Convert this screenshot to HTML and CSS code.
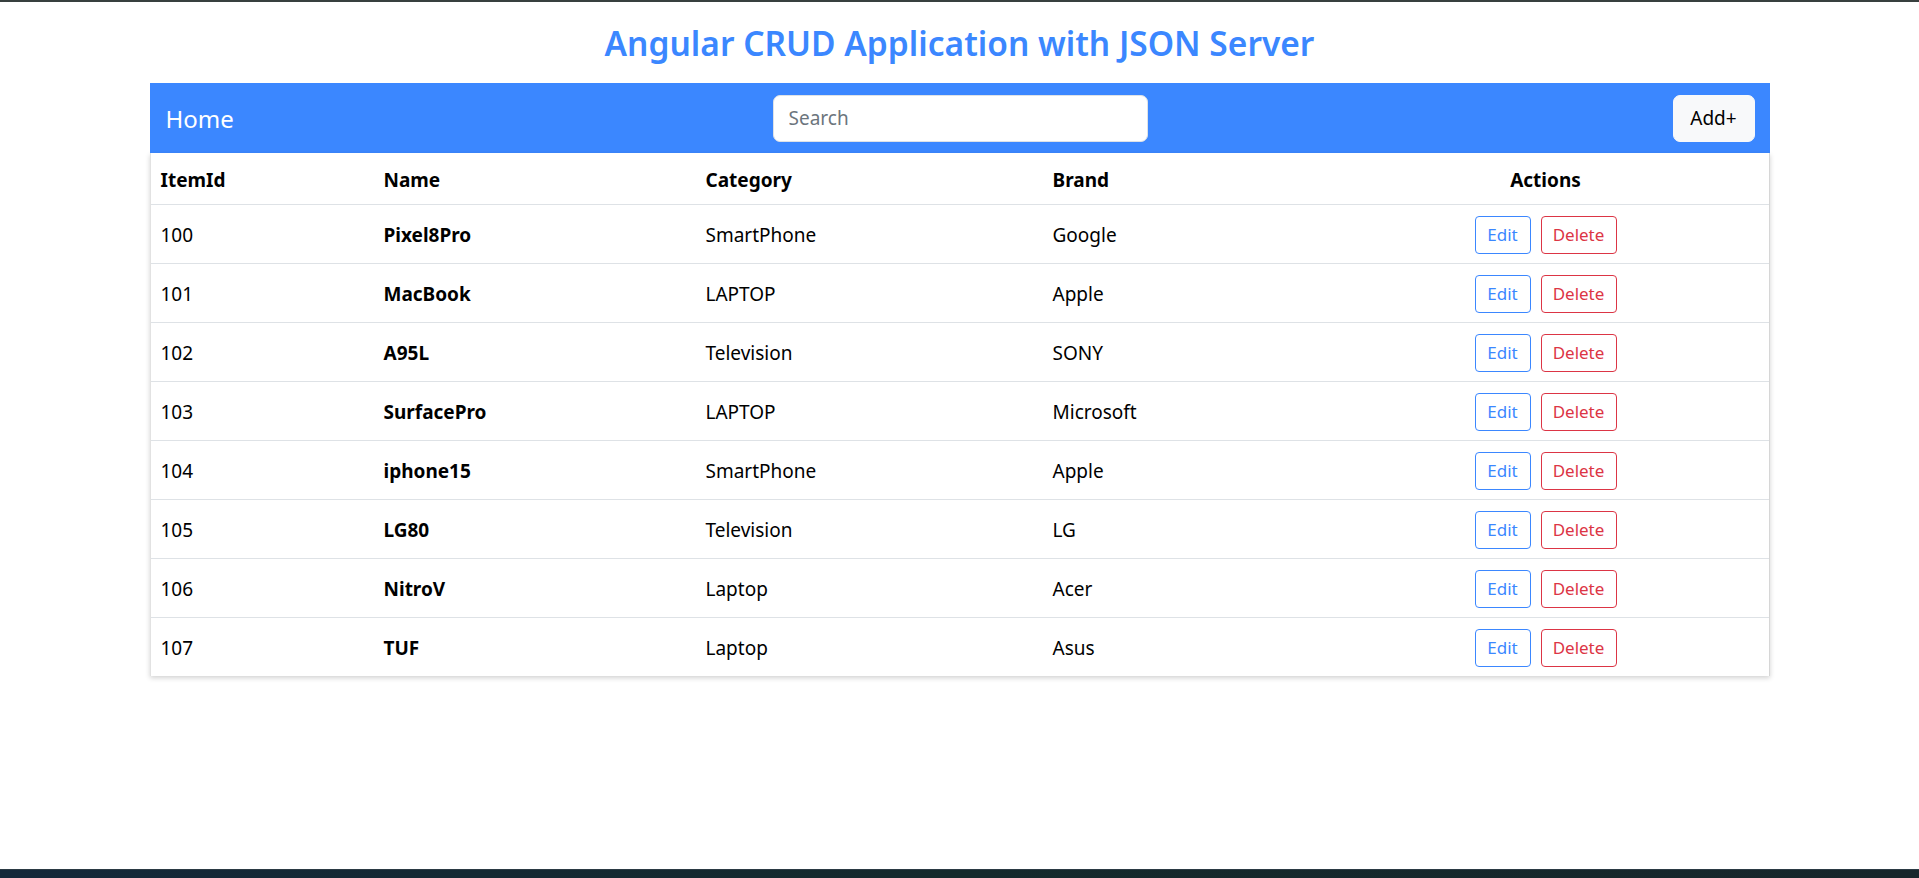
FILE: index.html
```html
<!DOCTYPE html>
<html lang="en">
<head>
<meta charset="utf-8">
<title>Angular CRUD Application with JSON Server</title>
<link rel="stylesheet" href="styles.css">
</head>
<body>
<div class="page">
  <main class="main">
    <h2 class="title">Angular CRUD Application with JSON Server</h2>
    <div class="container">
      <nav class="navbar">
        <a class="brand" href="#">Home</a>
        <input class="search" type="text" placeholder="Search">
        <button class="add-btn" type="button">Add+</button>
      </nav>
      <div class="card">
        <table class="items">
          <colgroup>
            <col class="c1"><col class="c2"><col class="c3"><col class="c4"><col class="c5">
          </colgroup>
          <thead>
            <tr><th>ItemId</th><th>Name</th><th>Category</th><th>Brand</th><th class="center">Actions</th></tr>
          </thead>
          <tbody>
            <tr><td>100</td><td class="bold">Pixel8Pro</td><td>SmartPhone</td><td>Google</td><td class="center"><button class="btn edit">Edit</button><button class="btn del">Delete</button></td></tr>
            <tr><td>101</td><td class="bold">MacBook</td><td>LAPTOP</td><td>Apple</td><td class="center"><button class="btn edit">Edit</button><button class="btn del">Delete</button></td></tr>
            <tr><td>102</td><td class="bold">A95L</td><td>Television</td><td>SONY</td><td class="center"><button class="btn edit">Edit</button><button class="btn del">Delete</button></td></tr>
            <tr><td>103</td><td class="bold">SurfacePro</td><td>LAPTOP</td><td>Microsoft</td><td class="center"><button class="btn edit">Edit</button><button class="btn del">Delete</button></td></tr>
            <tr><td>104</td><td class="bold">iphone15</td><td>SmartPhone</td><td>Apple</td><td class="center"><button class="btn edit">Edit</button><button class="btn del">Delete</button></td></tr>
            <tr><td>105</td><td class="bold">LG80</td><td>Television</td><td>LG</td><td class="center"><button class="btn edit">Edit</button><button class="btn del">Delete</button></td></tr>
            <tr><td>106</td><td class="bold">NitroV</td><td>Laptop</td><td>Acer</td><td class="center"><button class="btn edit">Edit</button><button class="btn del">Delete</button></td></tr>
            <tr><td>107</td><td class="bold">TUF</td><td>Laptop</td><td>Asus</td><td class="center"><button class="btn edit">Edit</button><button class="btn del">Delete</button></td></tr>
          </tbody>
        </table>
      </div>
    </div>
  </main>
  <div class="taskbar"></div>
</div>
</body>
</html>
```
FILE: styles.css
```css
* { box-sizing: border-box; }
html, body { margin: 0; padding: 0; }
body {
  font-family: "Noto Sans", "Open Sans", sans-serif;
  font-size: 19px;
  color: #000;
  background: #fff;
}
.page {
  height: 100vh;
  display: flex;
  flex-direction: column;
  border-top: 2px solid #38403f;
}
.main { flex: 1; }
.taskbar {
  height: 9px;
  background: linear-gradient(90deg, #14283a 0%, #142a2c 50%, #17262b 100%);
  border-top: 1px solid #2b3a44;
}
.title {
  margin: 0;
  padding: 17px 0 16px;
  text-align: center;
  font-size: 33.5px;
  line-height: 48px;
  font-weight: 600;
  color: #3b87ff;
}
.container {
  width: 1620px;
  margin: 0 auto;
}
.navbar {
  height: 70px;
  background: #3b87ff;
  display: grid;
  grid-template-columns: 1fr auto 1fr;
  align-items: center;
  padding: 0 15px 0 16px;
}
.brand {
  color: #fff;
  text-decoration: none;
  font-size: 24px;
  justify-self: start;
}
.search {
  width: 375px;
  height: 47px;
  border: 1px solid #dee2e6;
  border-radius: 7px;
  padding: 0 15px;
  font-family: inherit;
  font-size: 19px;
  color: #212529;
  outline: none;
}
.search::placeholder { color: #6c757d; }
.add-btn {
  justify-self: end;
  width: 82px;
  height: 47px;
  border: 1px solid #f8f9fa;
  border-radius: 7px;
  background: #f8f9fa;
  color: #000;
  font-family: inherit;
  font-size: 19px;
  padding: 0;
}
.card {
  box-shadow: 0 2px 5px rgba(0, 0, 0, 0.18);
  border-left: 1px solid #e2e2e2;
  border-right: 1px solid #d6d6d6;
}
.items {
  width: 100%;
  border-collapse: collapse;
  table-layout: fixed;
}
.c1 { width: 223px; }
.c2 { width: 322px; }
.c3 { width: 347px; }
.c4 { width: 280px; }
.c5 { width: 446px; }
.items th, .items td {
  padding: 11px 10px 9px;
  line-height: 30px;
  text-align: left;
  border-bottom: 1px solid #dee2e6;
  vertical-align: middle;
}
.items th { font-weight: 700; padding: 12px 10px 9px; }
.items tbody tr:last-child td { border-bottom: none; }
.items .center { text-align: center; }
.bold { font-weight: 700; }
.btn {
  display: inline-block;
  height: 38px;
  padding: 0 8px;
  font-family: inherit;
  font-size: 17px;
  line-height: 36px;
  background: #fff;
  border-radius: 4px;
  vertical-align: middle;
}
.edit {
  width: 56px;
  border: 1px solid #3b87ff;
  color: #3b87ff;
  margin-right: 10px;
}
.del {
  width: 76px;
  border: 1px solid #dc3545;
  color: #dc3545;
}
```
